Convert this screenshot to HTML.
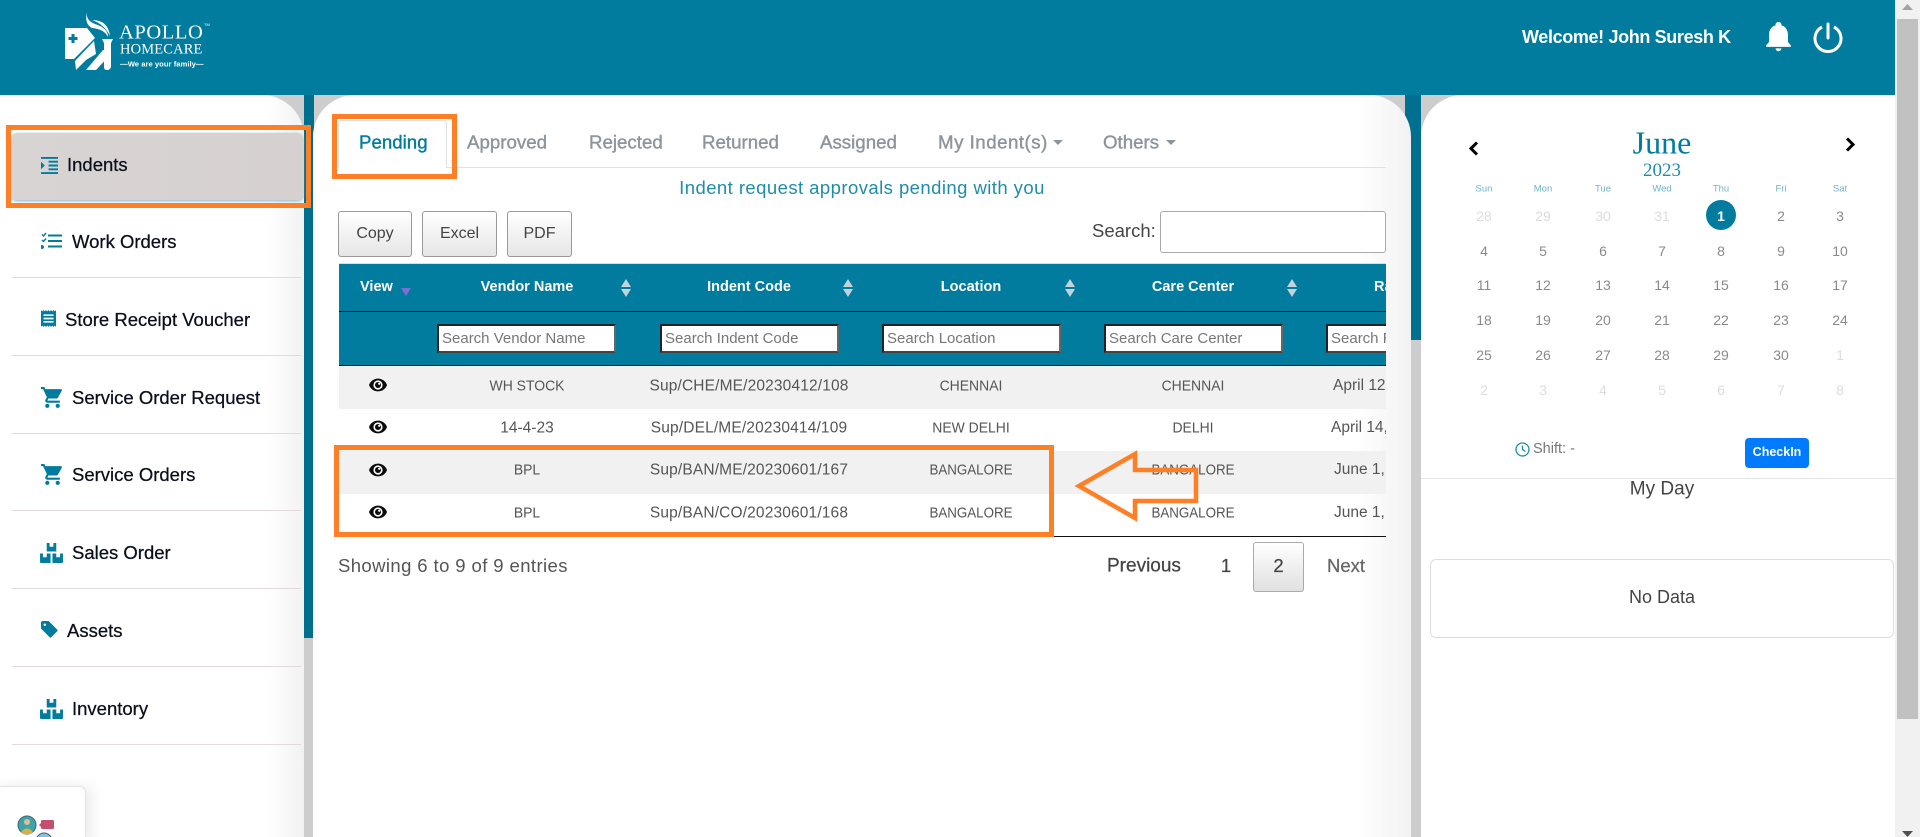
<!DOCTYPE html>
<html><head><meta charset="utf-8"><title>Apollo Homecare</title>
<style>
*{box-sizing:border-box}
html,body{margin:0;padding:0;width:1920px;height:837px;overflow:hidden;background:#cdcdcd;font-family:"Liberation Sans",sans-serif}
#r{position:absolute;left:0;top:0;width:1920px;height:837px;overflow:hidden;background:#cdcdcd}
.a{position:absolute}
.l,.c{position:absolute;white-space:nowrap;line-height:1}
.l{transform:translateY(-50%)}
.c{transform:translate(-50%,-50%)}
.side{font-size:18.500px;color:#0a0f1c;-webkit-text-stroke:.25px #0a0f1c}
.tab{font-size:18.700px;color:#8d959c;-webkit-text-stroke:.4px #8d959c}
.btn{position:absolute;top:211px;height:46px;border:1px solid #999;border-radius:3px;background:linear-gradient(#fff,#e6e6e6);color:#444;font-size:16px;text-align:center;line-height:44px}
.th{font-size:14.500px;font-weight:bold;color:#fff}
.inp{position:absolute;top:324px;height:29px;background:#fff;border:2px solid;border-color:#222 #666 #444 #222;color:#777;font-size:15px;line-height:25px;padding-left:3px;overflow:hidden;white-space:nowrap;width:179px}
.td{font-size:15px;color:#555}
.u{transform:translate(-50%,-50%) scaleX(.93)}
.b{transform:translate(-50%,-50%) scaleX(.89)}
.k{font-size:15.500px;letter-spacing:.15px}
.sep{position:absolute;left:12px;width:289px;height:1px;background:#e2d9dd}
.d{font-size:14px;color:#8a8a8a}
.o{font-size:14px;color:#dcdcdc}
.w{font-size:9.500px;color:#6fb4c8}
</style></head>
<body><div id="r">
<!-- backgrounds -->
<div class="a" style="left:0;top:0;width:1895px;height:95px;background:#017c9e"></div>
<div class="a" style="left:304px;top:95px;width:10px;height:543px;background:#006f8d"></div>
<div class="a" style="left:1405px;top:95px;width:16px;height:245px;background:#017090"></div>

<!-- logo -->
<svg class="a" style="left:60px;top:8px" width="62" height="66" viewBox="60 8 62 66">
<path fill="#fff" d="M65 28H87L95 38L74 59H65Z"/>
<path fill="#017c9e" d="M71.500 34h3v3h3v3h-3v3h-3v-3h-3v-3h3z"/>
<path fill="#fff" d="M75 61L94 41L96 54L86 60L76 70Z"/>
<path fill="#fff" d="M86 70L103 50H108L110 55L96 70Z"/>
<path fill="#fff" d="M102 39H113L111 43V67Q110 70 107 70Q104 70 104 67V43Z"/>
<path fill="#fff" d="M87 11Q85 20 95 24Q108 28 108 37Q104 29 92 28Q84 24 87 11Z"/>
<path fill="#fff" d="M92 20Q108 20 110 36Q104 24 92 20Z"/>
</svg>
<div class="l" style="left:119px;top:33px;font:20.500px 'Liberation Serif',serif;letter-spacing:.6px;color:#fff">APOLLO</div>
<div class="l" style="left:120px;top:50px;font:14.500px 'Liberation Serif',serif;letter-spacing:.15px;color:#fff">HOMECARE</div>
<div class="l" style="left:120px;top:64px;font:bold 7.700px 'Liberation Sans',sans-serif;color:#fff">—We are your family—</div>
<div class="l" style="left:204px;top:25px;font-size:4px;color:#fff">TM</div>

<!-- top right -->
<div class="l" style="left:1522px;top:37px;font-size:18px;letter-spacing:-.36px;font-weight:bold;color:#fff">Welcome! John Suresh K</div>
<svg class="a" style="left:1765px;top:20px" width="27" height="32" viewBox="3 1 18 22"><path fill="#fff" d="M12 22.500c1.100 0 2-.9 2-2h-4c0 1.100.89 2 2 2zm6.500-6.500v-5c0-3.070-1.640-5.640-4.500-6.320V4c0-.83-.67-1.500-2-1.500s-2 .67-2 1.500v.68C7.130 5.360 5.500 7.920 5.500 11v5l-2 2.500v1h17v-1l-2-2.500z"/></svg>
<svg class="a" style="left:1812px;top:21px" width="32" height="32" viewBox="0 0 32 32"><path fill="none" stroke="#fff" stroke-width="3" d="M10 6A13 13 0 1 0 22 6"/><path stroke="#fff" stroke-width="3" stroke-linecap="round" d="M16 3V17"/></svg>

<!-- left panel -->
<div class="a" style="left:0;top:95px;width:304px;height:742px;border-top-right-radius:42px;background:linear-gradient(90deg,#fff 0,#fff 88%,#f2f2f2 100%)"></div>
<div class="a" style="left:11px;top:133px;width:292px;height:67px;background:linear-gradient(90deg,#d9d4d4,#d6d0d0);border-radius:6px;box-shadow:0 1px 3px #7fb0c0"></div>
<div class="a" style="left:6px;top:125px;width:305px;height:83px;border:5px solid #ff7f27"></div>

<svg class="a" style="left:41px;top:157px" width="17" height="17" viewBox="3 3 18 18"><path fill="#017c9e" d="M3 21h18v-2H3v2zM3 8v8l4-4-4-4zm8 9h10v-2H11v2zM3 3v2h18V3H3zm8 6h10V7H11v2zm0 4h10v-2H11v2z"/></svg>
<div class="l side" style="left:67px;top:165px">Indents</div>

<svg class="a" style="left:41px;top:232px" width="21" height="18" viewBox="0 0 21 18"><path fill="#017c9e" d="M7 2.500h14v2H7zM7 8h14v2H7zM7 13.500h14v2H7zM1 13a2 2 0 1 0 .01 0z"/><path fill="none" stroke="#017c9e" stroke-width="1.400" d="M1 2.500l1.500 1.500 2.500-3M1 8l1.500 1.500 2.500-3"/></svg>
<div class="l side" style="left:72px;top:242px">Work Orders</div>
<div class="sep" style="top:277px"></div>

<svg class="a" style="left:41px;top:309px" width="15" height="19" viewBox="3 2 18 20"><path fill="#017c9e" d="M18 17H6v-2h12v2zm0-4H6v-2h12v2zm0-4H6V7h12v2zM3 22l1.500-1.500L6 22l1.500-1.500L9 22l1.500-1.500L12 22l1.500-1.500L15 22l1.500-1.500L18 22l1.500-1.500L21 22V2l-1.500 1.500L18 2l-1.500 1.500L15 2l-1.500 1.500L12 2l-1.500 1.500L9 2 7.500 3.500 6 2 4.500 3.500 3 2v20z"/></svg>
<div class="l side" style="left:65px;top:320px">Store Receipt Voucher</div>
<div class="sep" style="top:355px"></div>

<svg class="a" style="left:41px;top:387px" width="22" height="21" viewBox="1 2 21 20"><path fill="#017c9e" d="M7 18c-1.100 0-1.990.9-1.990 2S5.900 22 7 22s2-.9 2-2-.9-2-2-2zM1 2v2h2l3.600 7.590-1.350 2.450c-.16.280-.25.610-.25.960 0 1.100.9 2 2 2h12v-2H7.420c-.14 0-.25-.11-.25-.25l.03-.12.9-1.630h7.450c.75 0 1.410-.41 1.750-1.030l3.580-6.490c.08-.14.120-.31.120-.48 0-.55-.45-1-1-1H5.210l-.94-2H1zm16 16c-1.100 0-1.990.9-1.990 2s.89 2 1.990 2 2-.9 2-2-.9-2-2-2z"/></svg>
<div class="l side" style="left:72px;top:398px">Service Order Request</div>
<div class="sep" style="top:433px"></div>

<svg class="a" style="left:41px;top:464px" width="22" height="21" viewBox="1 2 21 20"><path fill="#017c9e" d="M7 18c-1.100 0-1.990.9-1.990 2S5.900 22 7 22s2-.9 2-2-.9-2-2-2zM1 2v2h2l3.600 7.590-1.350 2.450c-.16.280-.25.610-.25.960 0 1.100.9 2 2 2h12v-2H7.420c-.14 0-.25-.11-.25-.25l.03-.12.9-1.630h7.450c.75 0 1.410-.41 1.750-1.030l3.580-6.490c.08-.14.120-.31.120-.48 0-.55-.45-1-1-1H5.210l-.94-2H1zm16 16c-1.100 0-1.990.9-1.990 2s.89 2 1.990 2 2-.9 2-2-.9-2-2-2z"/></svg>
<div class="l side" style="left:72px;top:475px">Service Orders</div>
<div class="sep" style="top:510px"></div>

<svg class="a" style="left:40px;top:542px" width="23" height="21" viewBox="0 0 24 22"><path fill="#017c9e" fill-rule="evenodd" d="M7 1h3v4h4V1h3v9H7zM0 12h3v4h4v-4h4v10H1a1 1 0 0 1-1-1zM13 12h4v4h4v-4h3v9a1 1 0 0 1-1 1H13z"/></svg>
<div class="l side" style="left:72px;top:553px">Sales Order</div>
<div class="sep" style="top:588px"></div>

<svg class="a" style="left:41px;top:621px" width="17" height="17" viewBox="0 0 18 18"><path fill="#017c9e" d="M0 2Q0 0 2 0H8L17.300 9.300Q18 10 17.300 10.700L10.700 17.300Q10 18 9.300 17.300L0 8Z"/><circle cx="4" cy="4" r="1.300" fill="#fff"/></svg>
<div class="l side" style="left:67px;top:631px">Assets</div>
<div class="sep" style="top:666px"></div>

<svg class="a" style="left:40px;top:698px" width="23" height="21" viewBox="0 0 24 22"><path fill="#017c9e" fill-rule="evenodd" d="M7 1h3v4h4V1h3v9H7zM0 12h3v4h4v-4h4v10H1a1 1 0 0 1-1-1zM13 12h4v4h4v-4h3v9a1 1 0 0 1-1 1H13z"/></svg>
<div class="l side" style="left:72px;top:709px">Inventory</div>
<div class="sep" style="top:744px"></div>

<!-- chat card -->
<div class="a" style="left:-8px;top:786px;width:94px;height:60px;background:#fff;border:1px solid #e2e2e2;border-radius:6px;box-shadow:6px 0 14px rgba(0,0,0,.08)"></div>
<svg class="a" style="left:15px;top:814px" width="45" height="23" viewBox="0 0 45 23">
<circle cx="12" cy="11" r="9" fill="#3ba5a8" stroke="#4a6078" stroke-width="1"/>
<circle cx="12" cy="8" r="3" fill="#e8b796"/><path d="M6 18q6-7 12 0l-2 2h-8z" fill="#d8b23e"/>
<rect x="26" y="6" width="13" height="9" rx="1.500" fill="#c2506e"/>
<path d="M26 9l-2 2 2 2z" fill="#c2506e"/>
<circle cx="29" cy="27" r="8" fill="#7fc4e0" stroke="#4a6078"/>
</svg>

<!-- center panel -->
<div class="a" style="left:313px;top:95px;width:1098px;height:742px;border-radius:42px 42px 0 0;background:linear-gradient(90deg,#fff 0,#fff 95%,#f2f2f2 100%)"></div>

<div class="a" style="left:338px;top:167px;width:1048px;height:1px;background:#dee2e6"></div>
<div class="a" style="left:338px;top:120px;width:109px;height:48px;background:#fff;border:1px solid #dee2e6;border-bottom:0;border-radius:4px 4px 0 0"></div>
<div class="l tab" style="left:359px;top:143px;color:#017c9e;-webkit-text-stroke:.4px #017c9e">Pending</div>
<div class="l tab" style="left:467px;top:143px">Approved</div>
<div class="l tab" style="left:589px;top:143px">Rejected</div>
<div class="l tab" style="left:702px;top:143px">Returned</div>
<div class="l tab" style="left:820px;top:143px">Assigned</div>
<div class="l tab" style="left:938px;top:143px;letter-spacing:.5px">My Indent(s)</div>
<div class="a" style="left:1053px;top:140px;border:5px solid transparent;border-top-color:#8d959c;border-bottom:0"></div>
<div class="l tab" style="left:1103px;top:143px">Others</div>
<div class="a" style="left:1166px;top:140px;border:5px solid transparent;border-top-color:#8d959c;border-bottom:0"></div>

<div class="c" style="left:862px;top:188px;font-size:18.500px;letter-spacing:.44px;color:#1f8cab">Indent request approvals pending with you</div>

<div class="btn" style="left:338px;width:74px">Copy</div>
<div class="btn" style="left:422px;width:75px">Excel</div>
<div class="btn" style="left:507px;width:65px">PDF</div>
<div class="l" style="left:1092px;top:231px;font-size:18.500px;color:#444">Search:</div>
<div class="a" style="left:1160px;top:211px;width:226px;height:42px;border:1px solid #aaa;border-radius:3px;background:#fff"></div>

<!-- table -->
<div class="a" style="left:339px;top:263px;width:1047px;height:275px;overflow:hidden">
  <div class="a" style="left:0;top:0;width:1047px;height:1px;background:#ddd"></div>
  <div class="a" style="left:0;top:1px;width:1047px;height:103px;background:#017c9e"></div>
  <div class="a" style="left:0;top:48px;width:1047px;height:1px;background:#111"></div>
  <div class="a" style="left:0;top:102px;width:1047px;height:1px;background:#111"></div>
  <div class="a" style="left:0;top:103px;width:1047px;height:43px;background:#f1f1f1"></div>
  <div class="a" style="left:0;top:188px;width:1047px;height:43px;background:#f1f1f1"></div>
  <div class="a" style="left:0;top:273px;width:1047px;height:1px;background:#111"></div>
</div>

<div class="l th" style="left:360px;top:287px">View</div>
<div class="a" style="left:401px;top:288px;border-left:5px solid transparent;border-right:5px solid transparent;border-top:8px solid #7a6fd2"></div>
<div class="c th" style="left:527px;top:287px">Vendor Name</div>
<div class="c th" style="left:749px;top:287px">Indent Code</div>
<div class="c th" style="left:971px;top:287px">Location</div>
<div class="c th" style="left:1193px;top:287px">Care Center</div>
<div class="a" style="left:1339px;top:277px;width:47px;height:20px;overflow:hidden;font-size:14.500px;font-weight:bold;color:#fff;line-height:20px;padding-left:35px">Rate</div>

<svg class="a" style="left:621px;top:279px" width="10" height="18"><path fill="#c3d3da" d="M0 8L5 0L10 8ZM0 10L5 18L10 10Z"/></svg>
<svg class="a" style="left:843px;top:279px" width="10" height="18"><path fill="#c3d3da" d="M0 8L5 0L10 8ZM0 10L5 18L10 10Z"/></svg>
<svg class="a" style="left:1065px;top:279px" width="10" height="18"><path fill="#c3d3da" d="M0 8L5 0L10 8ZM0 10L5 18L10 10Z"/></svg>
<svg class="a" style="left:1287px;top:279px" width="10" height="18"><path fill="#c3d3da" d="M0 8L5 0L10 8ZM0 10L5 18L10 10Z"/></svg>

<div class="inp" style="left:437px">Search Vendor Name</div>
<div class="inp" style="left:660px">Search Indent Code</div>
<div class="inp" style="left:882px">Search Location</div>
<div class="inp" style="left:1104px">Search Care Center</div>
<div class="inp" style="left:1326px;width:60px;border-right:0">Search Rate</div>

<!-- rows -->
<svg width="0" height="0" style="position:absolute"><defs><g id="e"><path d="M0 7C3-1.500 15-1.500 18 7C15 15.500 3 15.500 0 7Z" fill="#0b0b0b"/><circle cx="9" cy="7" r="4.600" fill="#fff"/><circle cx="9" cy="7" r="3" fill="#0b0b0b"/><circle cx="10.200" cy="5.800" r="1.100" fill="#fff"/></g></defs></svg>
<svg class="a" style="left:369px;top:378px" width="18" height="14"><use href="#e"/></svg>
<svg class="a" style="left:369px;top:420px" width="18" height="14"><use href="#e"/></svg>
<svg class="a" style="left:369px;top:463px" width="18" height="14"><use href="#e"/></svg>
<svg class="a" style="left:369px;top:505px" width="18" height="14"><use href="#e"/></svg>

<div class="c td u" style="left:527px;top:386px">WH STOCK</div>
<div class="c td k" style="left:749px;top:386px">Sup/CHE/ME/20230412/108</div>
<div class="c td u" style="left:971px;top:386px">CHENNAI</div>
<div class="c td u" style="left:1193px;top:386px">CHENNAI</div>
<div class="c td" style="left:527px;top:428px;font-size:15.500px">14-4-23</div>
<div class="c td k" style="left:749px;top:428px">Sup/DEL/ME/20230414/109</div>
<div class="c td u" style="left:971px;top:428px">NEW DELHI</div>
<div class="c td u" style="left:1193px;top:428px">DELHI</div>
<div class="c td u" style="left:527px;top:470px">BPL</div>
<div class="c td k" style="left:749px;top:470px">Sup/BAN/ME/20230601/167</div>
<div class="c td b" style="left:971px;top:470px">BANGALORE</div>
<div class="c td b" style="left:1193px;top:470px">BANGALORE</div>
<div class="c td u" style="left:527px;top:513px">BPL</div>
<div class="c td k" style="left:749px;top:513px">Sup/BAN/CO/20230601/168</div>
<div class="c td b" style="left:971px;top:513px">BANGALORE</div>
<div class="c td b" style="left:1193px;top:513px">BANGALORE</div>

<div class="a td" style="left:1333px;top:376px;width:53px;overflow:hidden;white-space:nowrap;line-height:20px;font-size:15.500px">April 12, 2023</div>
<div class="a td" style="left:1331px;top:418px;width:55px;overflow:hidden;white-space:nowrap;line-height:20px;font-size:15.500px">April 14, 2023</div>
<div class="a td" style="left:1334px;top:460px;width:52px;overflow:hidden;white-space:nowrap;line-height:20px;font-size:15.500px">June 1, 2023</div>
<div class="a td" style="left:1334px;top:503px;width:52px;overflow:hidden;white-space:nowrap;line-height:20px;font-size:15.500px">June 1, 2023</div>

<!-- footer -->
<div class="l" style="left:338px;top:566px;font-size:18.500px;letter-spacing:.4px;color:#555">Showing 6 to 9 of 9 entries</div>
<div class="l" style="left:1107px;top:566px;font-size:19px;color:#444;-webkit-text-stroke:.25px #444">Previous</div>
<div class="c" style="left:1226px;top:566px;font-size:18.500px;color:#444;-webkit-text-stroke:.25px #444">1</div>
<div class="a" style="left:1253px;top:542px;width:51px;height:50px;border:1px solid #aaa;border-radius:3px;background:linear-gradient(#fff,#e0e0e0);text-align:center;line-height:46px;font-size:18.500px;color:#444;-webkit-text-stroke:.25px #444">2</div>
<div class="l" style="left:1327px;top:566px;font-size:18.500px;color:#666;-webkit-text-stroke:.25px #666">Next</div>

<!-- right panel -->
<div class="a" style="left:1421px;top:95px;width:474px;height:742px;border-top-left-radius:42px;background:#fff"></div>
<div class="c" style="left:1662px;top:143px;font:32px 'Liberation Serif',serif;color:#017c9e">June</div>
<div class="c" style="left:1662px;top:171px;font:19px 'Liberation Serif',serif;color:#1f8cab">2023</div>
<svg class="a" style="left:1468px;top:141px" width="11" height="15" viewBox="0 0 11 15"><path fill="none" stroke="#000" stroke-width="3" d="M9 1.500L3 7.500L9 13.500"/></svg>
<svg class="a" style="left:1845px;top:137px" width="11" height="15" viewBox="0 0 11 15"><path fill="none" stroke="#000" stroke-width="3" d="M2 1.500L8 7.500L2 13.500"/></svg>

<div class="c w" style="left:1484px;top:189px">Sun</div><div class="c w" style="left:1543px;top:189px">Mon</div><div class="c w" style="left:1603px;top:189px">Tue</div><div class="c w" style="left:1662px;top:189px">Wed</div><div class="c w" style="left:1721px;top:189px">Thu</div><div class="c w" style="left:1781px;top:189px">Fri</div><div class="c w" style="left:1840px;top:189px">Sat</div>

<div class="c o" style="left:1484px;top:216px">28</div><div class="c o" style="left:1543px;top:216px">29</div><div class="c o" style="left:1603px;top:216px">30</div><div class="c o" style="left:1662px;top:216px">31</div>
<div class="a" style="left:1706px;top:200px;width:30px;height:30px;border-radius:50%;background:#017c9e"></div>
<div class="c" style="left:1721px;top:216px;font-size:14px;font-weight:bold;color:#fff">1</div>
<div class="c d" style="left:1781px;top:216px">2</div><div class="c d" style="left:1840px;top:216px">3</div>

<div class="c d" style="left:1484px;top:251px">4</div><div class="c d" style="left:1543px;top:251px">5</div><div class="c d" style="left:1603px;top:251px">6</div><div class="c d" style="left:1662px;top:251px">7</div><div class="c d" style="left:1721px;top:251px">8</div><div class="c d" style="left:1781px;top:251px">9</div><div class="c d" style="left:1840px;top:251px">10</div>

<div class="c d" style="left:1484px;top:285px">11</div><div class="c d" style="left:1543px;top:285px">12</div><div class="c d" style="left:1603px;top:285px">13</div><div class="c d" style="left:1662px;top:285px">14</div><div class="c d" style="left:1721px;top:285px">15</div><div class="c d" style="left:1781px;top:285px">16</div><div class="c d" style="left:1840px;top:285px">17</div>

<div class="c d" style="left:1484px;top:320px">18</div><div class="c d" style="left:1543px;top:320px">19</div><div class="c d" style="left:1603px;top:320px">20</div><div class="c d" style="left:1662px;top:320px">21</div><div class="c d" style="left:1721px;top:320px">22</div><div class="c d" style="left:1781px;top:320px">23</div><div class="c d" style="left:1840px;top:320px">24</div>

<div class="c d" style="left:1484px;top:355px">25</div><div class="c d" style="left:1543px;top:355px">26</div><div class="c d" style="left:1603px;top:355px">27</div><div class="c d" style="left:1662px;top:355px">28</div><div class="c d" style="left:1721px;top:355px">29</div><div class="c d" style="left:1781px;top:355px">30</div><div class="c o" style="left:1840px;top:355px">1</div>

<div class="c o" style="left:1484px;top:390px">2</div><div class="c o" style="left:1543px;top:390px">3</div><div class="c o" style="left:1603px;top:390px">4</div><div class="c o" style="left:1662px;top:390px">5</div><div class="c o" style="left:1721px;top:390px">6</div><div class="c o" style="left:1781px;top:390px">7</div><div class="c o" style="left:1840px;top:390px">8</div>

<svg class="a" style="left:1515px;top:442px" width="15" height="15" viewBox="0 0 15 15"><circle cx="7.500" cy="7.500" r="6.500" fill="none" stroke="#1f8cab" stroke-width="1.300"/><path d="M7.500 3.500V7.500L10.500 9.500" fill="none" stroke="#1f8cab" stroke-width="1.300"/></svg>
<div class="l" style="left:1533px;top:449px;font-size:14.500px;color:#777">Shift: -</div>
<div class="a" style="left:1745px;top:438px;width:64px;height:30px;background:#007bff;border-radius:4px;color:#fff;font-size:12.500px;font-weight:bold;text-align:center;line-height:28px">CheckIn</div>
<div class="a" style="left:1421px;top:478px;width:474px;height:1px;background:#e5e5e5"></div>
<div class="c" style="left:1662px;top:489px;font-size:19px;color:#444">My Day</div>
<div class="a" style="left:1430px;top:559px;width:464px;height:79px;border:1px solid #ddd;border-radius:6px"></div>
<div class="c" style="left:1662px;top:597px;font-size:18px;color:#444">No Data</div>

<!-- scrollbar -->
<div class="a" style="left:1895px;top:0;width:25px;height:837px;background:#f1f1f1"></div>
<div class="a" style="left:1897px;top:19px;width:21px;height:700px;background:#c1c1c1"></div>
<svg class="a" style="left:1902px;top:4px" width="11" height="6"><path fill="#a3a3a3" d="M0 6L5.500 0L11 6Z"/></svg>
<svg class="a" style="left:1902px;top:831px" width="11" height="6"><path fill="#505050" d="M0 0H11L5.500 6Z"/></svg>

<!-- annotations -->
<div class="a" style="left:332px;top:114px;width:125px;height:65px;border:5px solid #ff7f27"></div>
<div class="a" style="left:334px;top:445px;width:720px;height:92px;border:5px solid #ff7f27"></div>
<svg class="a" style="left:1070px;top:445px" width="135" height="82" viewBox="1070 445 135 82"><path fill="none" stroke="#ff7f27" stroke-width="4.500" d="M1079 486L1135 454V470H1196V501H1135V518Z"/></svg>
</div></body></html>
